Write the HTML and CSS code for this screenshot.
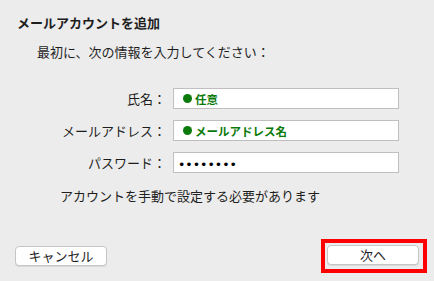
FILE: index.html
```html
<!DOCTYPE html>
<html lang="ja">
<head>
  <meta charset="UTF-8" />
  <meta name="viewport" content="width=device-width, initial-scale=1.0"/>
  <title>メールアカウントを追加</title>
  <link rel="stylesheet" href="styles.css">
</head>
<body>
  <div class="dialog">
    <h1>メールアカウントを追加</h1>
    <p class="intro">最初に、次の情報を入力してください：</p>

    <div class="form">
      <label class="label">氏名：</label>
      <div class="field"><span class="dot"></span><span class="hint">任意</span></div>

      <label class="label">メールアドレス：</label>
      <div class="field"><span class="dot"></span><span class="hint">メールアドレス名</span></div>

      <label class="label">パスワード：</label>
      <div class="field password">••••••••</div>
    </div>

    <p class="note">アカウントを手動で設定する必要があります</p>

    <div class="actions">
      <button class="btn">キャンセル</button>
      <span class="highlight"><button class="btn">次へ</button></span>
    </div>
  </div>
</body>
</html>
```

FILE: styles.css
```css
:root {
  --background: #ececec;
  --text: #1e1e1e;
  --field-border: #bfbfbf;
  --hint: #0a7a0a;
  --mark: #ff0000;
}

body {
  margin: 0;
  padding: 0;
  background-color: var(--background);
  font-family: "Noto Sans CJK JP", "Noto Sans", sans-serif;
  color: var(--text);
}

.dialog {
  display: flex;
  flex-direction: column;
  height: 281px;
  box-sizing: border-box;
  padding: 15px 7px 8px 17px;
}

h1 {
  margin: 0;
  font-size: 13px;
  line-height: 16px;
  font-weight: 700;
}

.intro {
  margin: 13px 0 0 20px;
  font-size: 13px;
  line-height: 16px;
}

.form {
  display: grid;
  grid-template-columns: 129px 226px;
  column-gap: 7px;
  row-gap: 11px;
  margin: 28px 0 0 20px;
}

.label {
  font-size: 13px;
  line-height: 21px;
  text-align: right;
}

.field {
  display: flex;
  align-items: center;
  gap: 3px;
  height: 21px;
  box-sizing: border-box;
  padding-left: 9px;
  background-color: #ffffff;
  border: 1px solid var(--field-border);
}

.dot {
  width: 9px;
  height: 9px;
  border-radius: 50%;
  background-color: var(--hint);
}

.hint {
  color: var(--hint);
  font-size: 11.5px;
  font-weight: 700;
  line-height: 14px;
}

.password {
  padding: 3px 0 0 4px;
  font-family: "DejaVu Sans", sans-serif;
  font-size: 12.5px;
  color: #000;
}

.note {
  margin: 15px 0 0 43px;
  font-size: 13px;
  line-height: 16px;
}

.actions {
  display: flex;
  justify-content: space-between;
  align-items: center;
  margin-top: auto;
}

.btn {
  width: 92px;
  height: 20px;
  padding: 0;
  font-family: inherit;
  font-size: 13px;
  line-height: 18px;
  color: var(--text);
  background-color: #ffffff;
  border: 1px solid #c6c6c6;
  border-radius: 4px;
  box-shadow: 0 1px 0 rgba(0, 0, 0, 0.08);
}

.actions > .btn {
  margin-left: -2px;
}

.highlight {
  display: flex;
  padding: 2px 4px 4px 2px;
  border: 4px solid var(--mark);
}
```
